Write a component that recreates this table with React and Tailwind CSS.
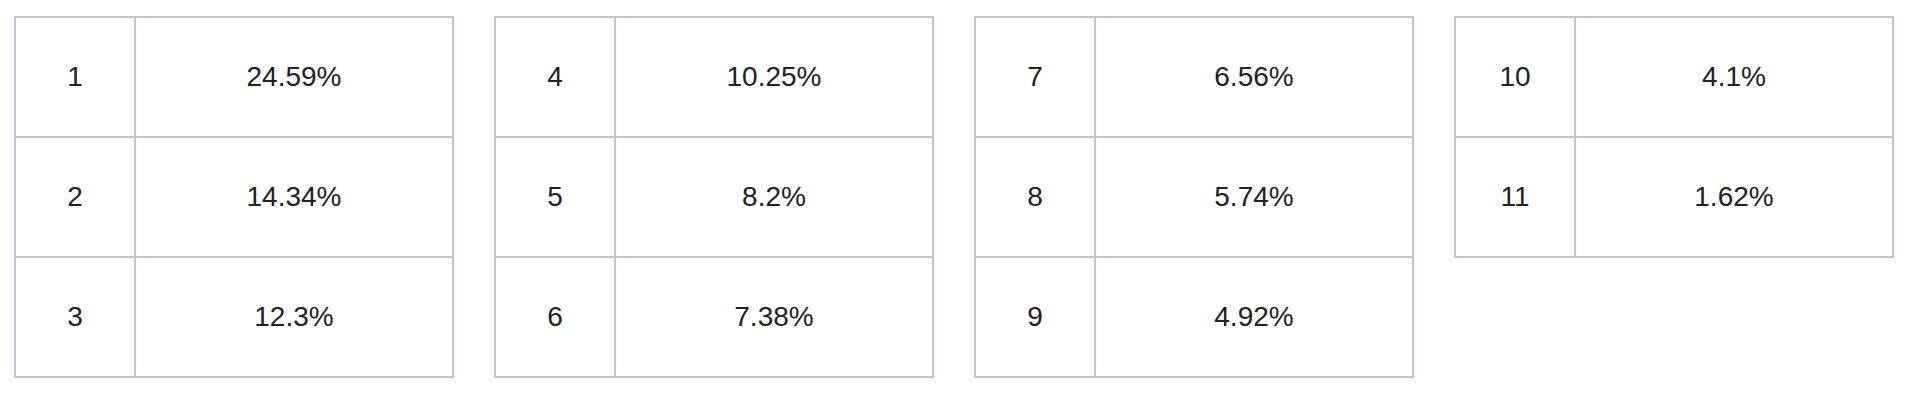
const groups = [
  [["1", "24.59%"], ["2", "14.34%"], ["3", "12.3%"]],
  [["4", "10.25%"], ["5", "8.2%"], ["6", "7.38%"]],
  [["7", "6.56%"], ["8", "5.74%"], ["9", "4.92%"]],
  [["10", "4.1%"], ["11", "1.62%"]],
]

function RankTable({ rows }) {
  return (
    <div className="w-[440px] border-2 border-[#bdc8cb]">
      {rows.map(([rank, pct], i) => (
        <div key={rank} className={i === 0 ? "flex h-[118px]" : "flex h-[120px] border-t-2 border-[#bdc8cb]"}>
          <div className="flex w-[118px] items-center justify-center">{rank}</div>
          <div className="flex flex-1 items-center justify-center border-l-2 border-[#bdc8cb]">{pct}</div>
        </div>
      ))}
    </div>
  )
}

export default function App() {
  return (
    <div
      className="flex items-start gap-[40px] bg-white pl-[14px] pt-[16px] text-[28px] text-[#222222]"
      style={{ fontFamily: '"Liberation Sans", Arial, sans-serif' }}
    >
      {groups.map((rows, i) => (
        <RankTable key={i} rows={rows} />
      ))}
    </div>
  )
}
